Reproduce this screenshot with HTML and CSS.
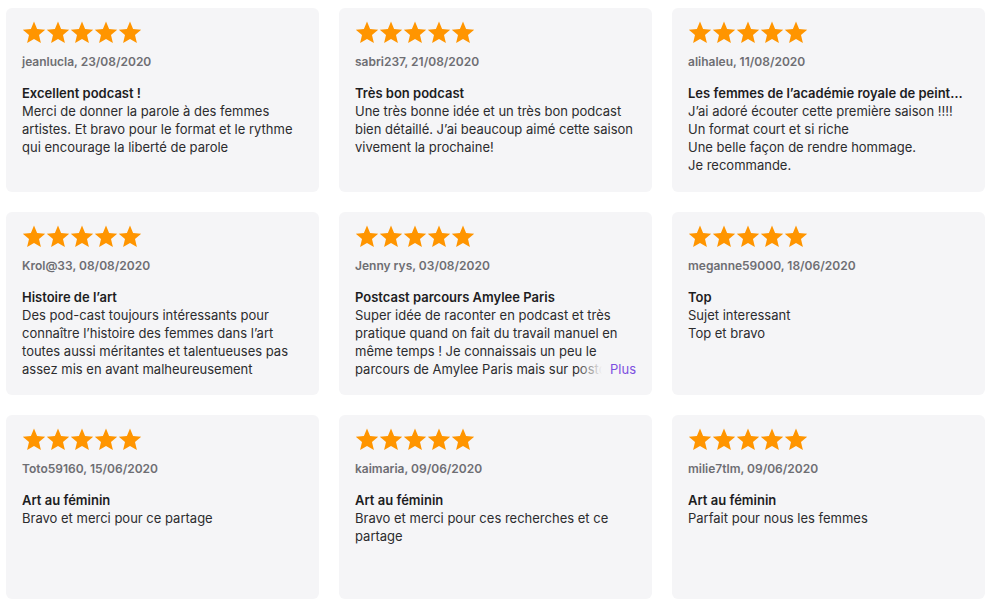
FILE: index.html
```html
<!DOCTYPE html>
<html lang="fr">
<head>
<meta charset="utf-8">
<title>Avis</title>
<link rel="stylesheet" href="styles.css">
</head>
<body>
<svg width="0" height="0" class="defs" aria-hidden="true">
  <defs>
    <symbol id="star" viewBox="0 0 24 24">
      <polygon points="12,0.6 15.1,8.1 23.2,8.8 17,14.1 18.9,22.1 12,17.9 5.1,22.1 7,14.1 0.8,8.8 8.9,8.1"/>
    </symbol>
  </defs>
</svg>
<main class="grid">
  <article class="card">
    <div class="stars"><svg><use href="#star"/></svg><svg><use href="#star"/></svg><svg><use href="#star"/></svg><svg><use href="#star"/></svg><svg><use href="#star"/></svg></div>
    <p class="meta">jeanlucla, 23/08/2020</p>
    <h3 class="title">Excellent podcast !</h3>
    <p class="body">Merci de donner la parole à des femmes artistes. Et bravo pour le format et le rythme qui encourage la liberté de parole</p>
  </article>
  <article class="card">
    <div class="stars"><svg><use href="#star"/></svg><svg><use href="#star"/></svg><svg><use href="#star"/></svg><svg><use href="#star"/></svg><svg><use href="#star"/></svg></div>
    <p class="meta">sabri237, 21/08/2020</p>
    <h3 class="title">Très bon podcast</h3>
    <p class="body">Une très bonne idée et un très bon podcast bien détaillé. J’ai beaucoup aimé cette saison vivement la prochaine!</p>
  </article>
  <article class="card">
    <div class="stars"><svg><use href="#star"/></svg><svg><use href="#star"/></svg><svg><use href="#star"/></svg><svg><use href="#star"/></svg><svg><use href="#star"/></svg></div>
    <p class="meta">alihaleu, 11/08/2020</p>
    <h3 class="title">Les femmes de l’académie royale de peinture et de sculpture</h3>
    <p class="body">J’ai adoré écouter cette première saison !!!!<br>Un format court et si riche<br>Une belle façon de rendre hommage.<br>Je recommande.</p>
  </article>
  <article class="card">
    <div class="stars"><svg><use href="#star"/></svg><svg><use href="#star"/></svg><svg><use href="#star"/></svg><svg><use href="#star"/></svg><svg><use href="#star"/></svg></div>
    <p class="meta">Krol@33, 08/08/2020</p>
    <h3 class="title">Histoire de l’art</h3>
    <p class="body">Des pod-cast toujours intéressants pour connaître l’histoire des femmes dans l’art toutes aussi méritantes et talentueuses pas assez mis en avant malheureusement</p>
  </article>
  <article class="card">
    <div class="stars"><svg><use href="#star"/></svg><svg><use href="#star"/></svg><svg><use href="#star"/></svg><svg><use href="#star"/></svg><svg><use href="#star"/></svg></div>
    <p class="meta">Jenny rys, 03/08/2020</p>
    <h3 class="title">Postcast parcours Amylee Paris</h3>
    <div class="clamp">
      <p class="body">Super idée de raconter en podcast et très pratique quand on fait du travail manuel en même temps ! Je connaissais un peu le parcours de Amylee Paris mais sur postcast c’est encore mieux, bravo pour ce travail.</p>
      <span class="more">Plus</span>
    </div>
  </article>
  <article class="card">
    <div class="stars"><svg><use href="#star"/></svg><svg><use href="#star"/></svg><svg><use href="#star"/></svg><svg><use href="#star"/></svg><svg><use href="#star"/></svg></div>
    <p class="meta">meganne59000, 18/06/2020</p>
    <h3 class="title">Top</h3>
    <p class="body">Sujet interessant<br>Top et bravo</p>
  </article>
  <article class="card">
    <div class="stars"><svg><use href="#star"/></svg><svg><use href="#star"/></svg><svg><use href="#star"/></svg><svg><use href="#star"/></svg><svg><use href="#star"/></svg></div>
    <p class="meta">Toto59160, 15/06/2020</p>
    <h3 class="title">Art au féminin</h3>
    <p class="body">Bravo et merci pour ce partage</p>
  </article>
  <article class="card">
    <div class="stars"><svg><use href="#star"/></svg><svg><use href="#star"/></svg><svg><use href="#star"/></svg><svg><use href="#star"/></svg><svg><use href="#star"/></svg></div>
    <p class="meta">kaimaria, 09/06/2020</p>
    <h3 class="title">Art au féminin</h3>
    <p class="body">Bravo et merci pour ces recherches et ce partage</p>
  </article>
  <article class="card">
    <div class="stars"><svg><use href="#star"/></svg><svg><use href="#star"/></svg><svg><use href="#star"/></svg><svg><use href="#star"/></svg><svg><use href="#star"/></svg></div>
    <p class="meta">milie7tlm, 09/06/2020</p>
    <h3 class="title">Art au féminin</h3>
    <p class="body">Parfait pour nous les femmes</p>
  </article>
</main>
</body>
</html>
```

FILE: styles.css
```css
* { box-sizing: border-box; }
html, body { margin: 0; padding: 0; background: #ffffff; }
body {
  font-family: Inter, "Noto Sans", "Liberation Sans", sans-serif;
  color: #1d1d1f;
  -webkit-font-smoothing: antialiased;
}
.defs { position: absolute; width: 0; height: 0; overflow: hidden; }
.grid {
  display: grid;
  grid-template-columns: repeat(3, 313px);
  grid-template-rows: repeat(3, 183.5px);
  column-gap: 20px;
  row-gap: 20px;
  padding: 8px 0 0 6px;
}
.card {
  background: #f5f5f7;
  border-radius: 6px;
  padding: 13px 16px 0 16px;
  overflow: hidden;
}
.stars {
  display: flex;
  height: 24px;
}
.stars svg {
  width: 24px;
  height: 24px;
  fill: #ff9500;
  flex: none;
}
.meta {
  margin: 9px 0 0 0;
  font-size: 12px;
  line-height: 16px;
  font-weight: 600;
  color: #6e6e73;
}
.title {
  margin: 14px 0 0 0;
  font-size: 13px;
  line-height: 18px;
  font-weight: 600;
  color: #1d1d1f;
  white-space: nowrap;
  overflow: hidden;
  text-overflow: ellipsis;
}
.body {
  margin: 0;
  font-size: 13px;
  line-height: 18px;
  font-weight: 400;
  color: #2c2c2e;
}
.clamp {
  position: relative;
  max-height: 72px;
  overflow: hidden;
}
.more {
  position: absolute;
  right: 0;
  bottom: 0;
  font-size: 13px;
  line-height: 18px;
  color: #7d4fe0;
  padding-left: 34px;
  background: linear-gradient(to right, rgba(245,245,247,0) 0, #f5f5f7 26px);
}
```
